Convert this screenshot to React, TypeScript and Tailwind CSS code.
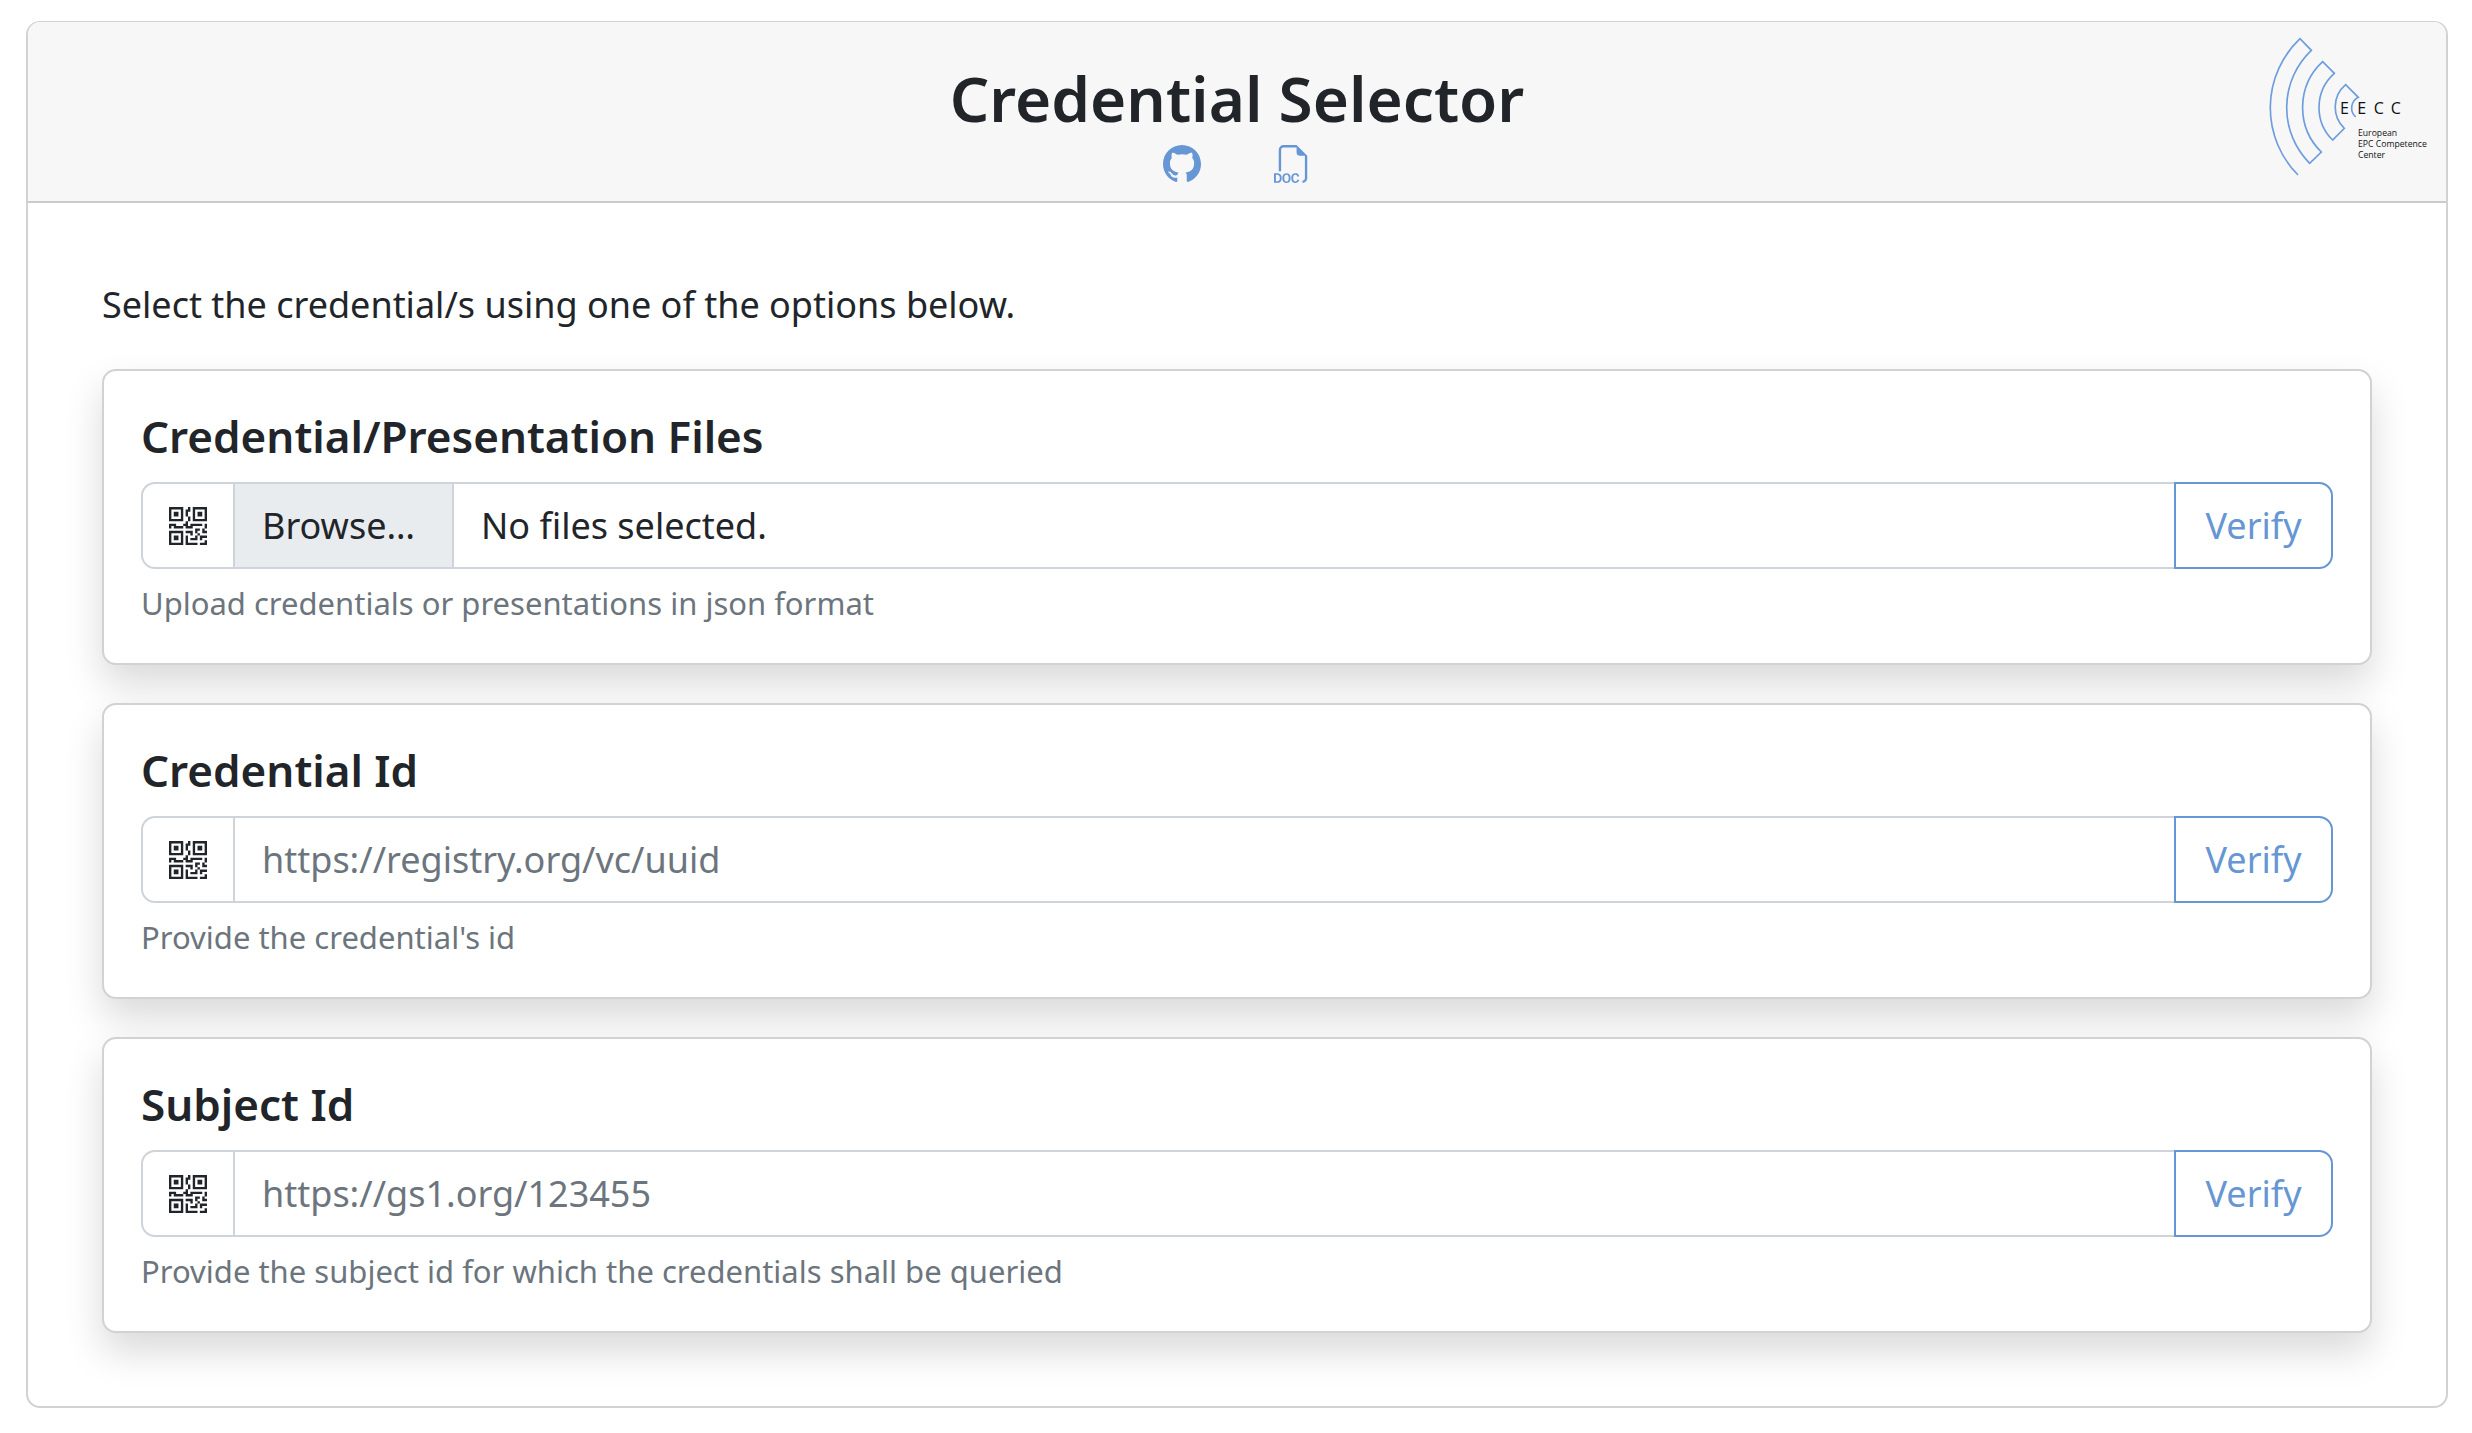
import { useState } from "react";
import { BsFiletypeDoc, BsGithub, BsQrCode } from "react-icons/bs";

function EeccLogo() {
  return (
    <svg
      viewBox="60 60 540 480"
      role="img"
      aria-label="European EPC Competence Center"
      className="h-[160px] w-[180px]"
    >
      <path
        d="M174 495A286 286 0 0 1 180 86L214 121A237 237 0 0 0 209 460L244 426A187 187 0 0 1 248 155L283 190A137 137 0 0 0 278 390L313 355A88 88 0 0 1 317 224L355 262A36 36 0 0 0 347 321"
        fill="none"
        stroke="#6d9ddd"
        strokeWidth="5"
      />
      <g className="font-['Open_Sans',sans-serif]" fill="#111111">
        <text x="300 352 401 452" y="311" fontSize="48">
          EECC
        </text>
        <g fontSize="26">
          <text x="354" y="379">European</text>
          <text x="354" y="411">EPC Competence</text>
          <text x="354" y="443">Center</text>
        </g>
      </g>
    </svg>
  );
}

function Header() {
  return (
    <header className="grid grid-cols-[1fr_auto_1fr] items-start border-b-2 border-[#cbcbcb] bg-[#f7f7f7]">
      <div />
      <div className="flex flex-col items-center gap-[9px] pt-[38px] pb-[18px]">
        <h1 className="text-[62px] leading-[76px] font-semibold">Credential Selector</h1>
        <nav className="flex gap-[73px] text-[38px] text-[#6696d3]">
          <a href="#github" aria-label="GitHub">
            <BsGithub />
          </a>
          <a href="#docs" aria-label="Documentation">
            <BsFiletypeDoc />
          </a>
        </nav>
      </div>
      <div className="justify-self-end pt-2 pr-[6px]">
        <EeccLogo />
      </div>
    </header>
  );
}

function FileField({ id }: { id: string }) {
  const [label, setLabel] = useState("No files selected.");
  return (
    <label
      htmlFor={id}
      className="relative flex min-w-0 flex-1 items-stretch border-y-2 border-[#ced4da]"
    >
      <input
        id={id}
        type="file"
        multiple
        className="sr-only"
        onChange={(e) => {
          const n = e.target.files?.length ?? 0;
          setLabel(n === 0 ? "No files selected." : n === 1 ? e.target.files![0].name : `${n} files selected.`);
        }}
      />
      <span className="flex w-[219px] items-center border-r-2 border-[#ced4da] bg-[#e9ecef] pl-[27px]">
        Browse…
      </span>
      <span className="flex items-center pl-[27px]">{label}</span>
    </label>
  );
}

type OptionProps = {
  id: string;
  title: string;
  help: string;
  placeholder?: string;
};

function OptionCard({ id, title, help, placeholder }: OptionProps) {
  return (
    <section className="rounded-[14px] border-2 border-[#d2d2d2] bg-white p-[37px] shadow-[0_19px_38px_rgba(0,0,0,0.15)]">
      <h2 className="mb-[18px] text-[44px] leading-[56px] font-semibold">
        <label htmlFor={id}>{title}</label>
      </h2>
      <div className="flex h-[87px] text-[36px] leading-[58px]">
        <button
          type="button"
          aria-label="Scan QR code"
          className="flex w-[94px] items-center justify-center rounded-l-[14px] border-2 border-[#ced4da] text-[38px]"
        >
          <BsQrCode />
        </button>
        {placeholder ? (
          <input
            id={id}
            type="text"
            placeholder={placeholder}
            className="min-w-0 flex-1 border-y-2 border-[#ced4da] px-[27px] outline-none placeholder:text-[#6c757d]"
          />
        ) : (
          <FileField id={id} />
        )}
        <button
          type="button"
          className="w-[159px] rounded-r-[14px] border-2 border-[#6696d3] text-[#6696d3]"
        >
          Verify
        </button>
      </div>
      <p className="mt-[11px] text-[31px] leading-[46px] text-[#6c757d]">{help}</p>
    </section>
  );
}

export default function App() {
  return (
    <div className="bg-white pt-[21px] pr-[24px] pb-[25px] pl-[26px] font-['Noto_Sans',sans-serif] text-[#212529]">
      <div className="overflow-hidden rounded-[14px] border-2 border-t border-[#d2d2d2]">
        <Header />
        <main className="px-[74px] py-[73px]">
          <p className="mb-[35px] text-[36px] leading-[58px]">
            Select the credential/s using one of the options below.
          </p>
          <div className="flex flex-col gap-[38px]">
            <OptionCard
              id="files"
              title="Credential/Presentation Files"
              help="Upload credentials or presentations in json format"
            />
            <OptionCard
              id="credential-id"
              title="Credential Id"
              placeholder="https://registry.org/vc/uuid"
              help="Provide the credential's id"
            />
            <OptionCard
              id="subject-id"
              title="Subject Id"
              placeholder="https://gs1.org/123455"
              help="Provide the subject id for which the credentials shall be queried"
            />
          </div>
        </main>
      </div>
    </div>
  );
}
